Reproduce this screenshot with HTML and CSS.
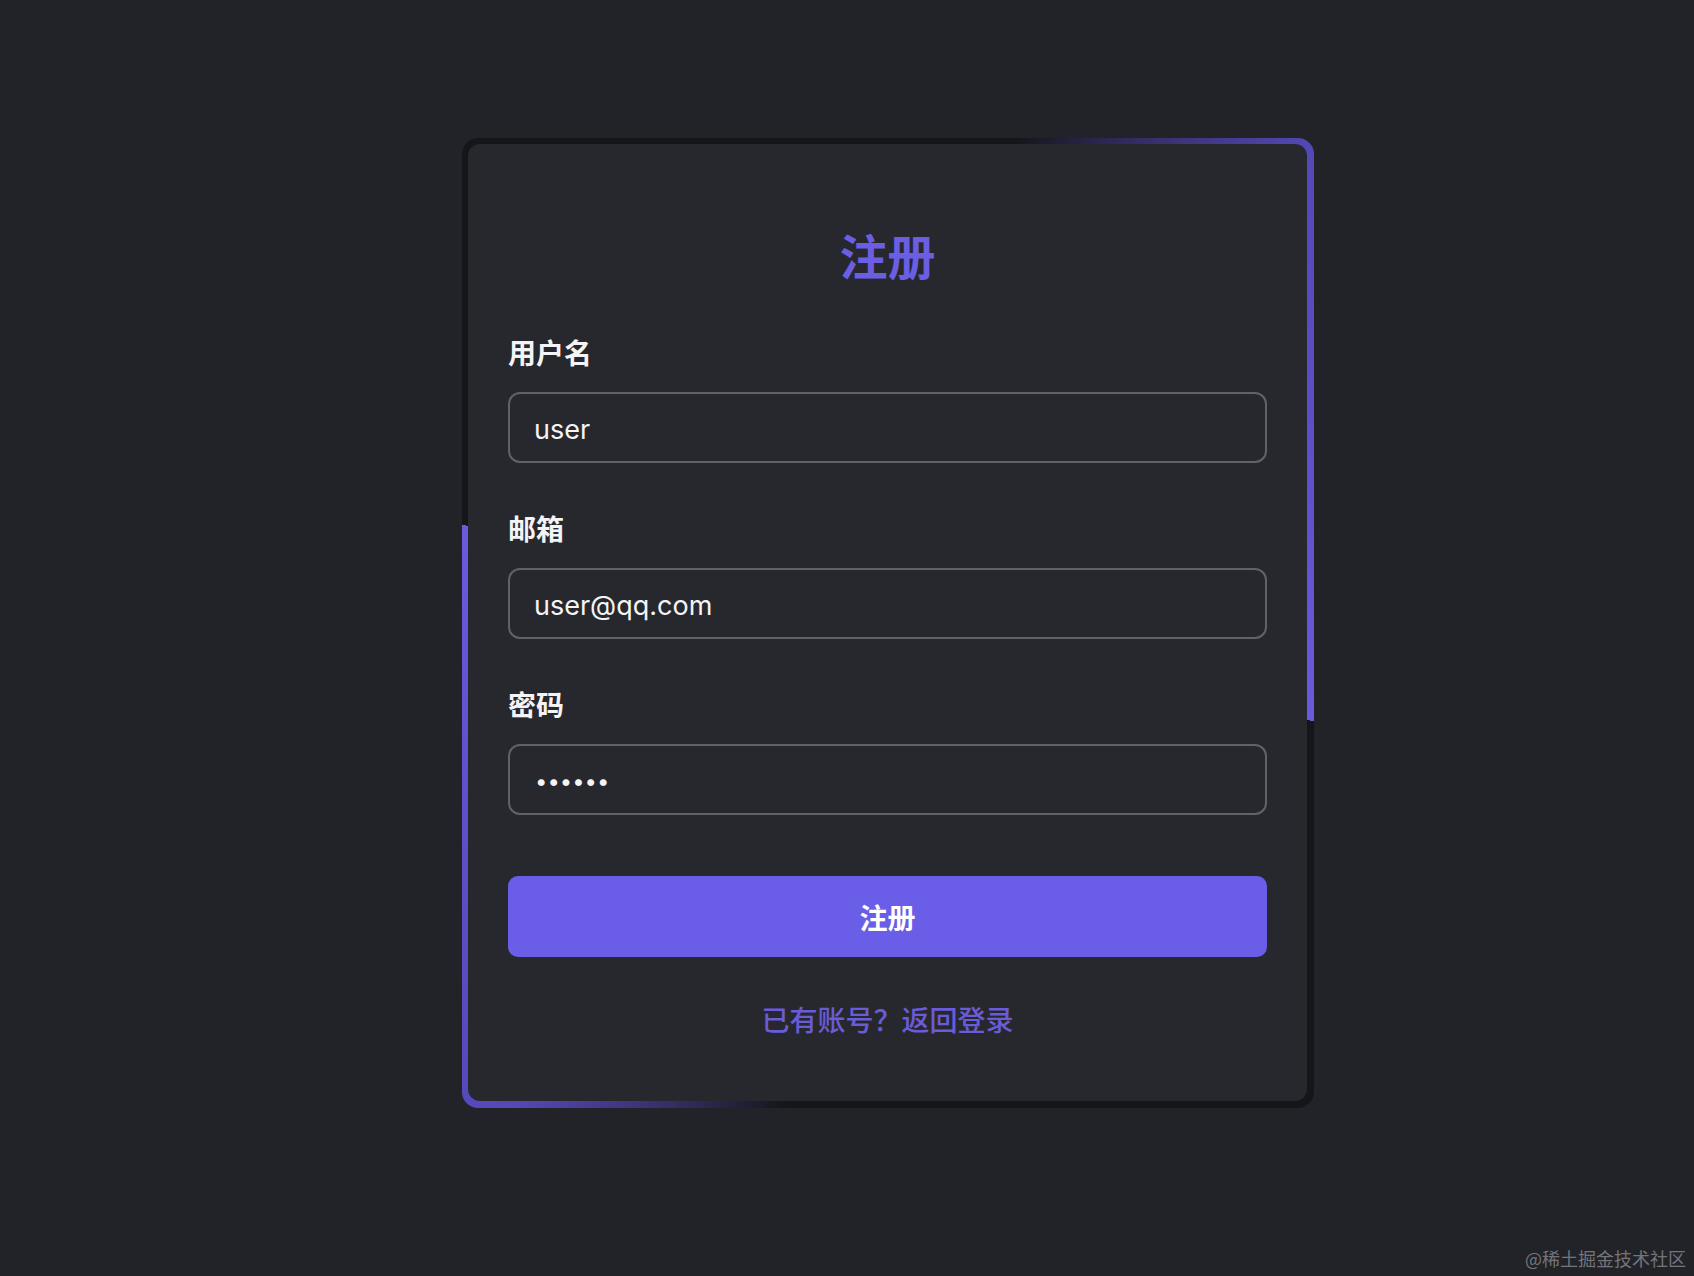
FILE: index.html
```html
<!DOCTYPE html>
<html lang="zh-CN">
<head>
<meta charset="utf-8">
<title>注册</title>
<link rel="stylesheet" href="styles.css">
</head>
<body>
<main class="page">
  <div class="card-frame">
    <form class="card">
      <h1 class="title">注册</h1>
      <div class="field">
        <label class="label" for="username">用户名</label>
        <input class="input" id="username" type="text" value="user">
      </div>
      <div class="field">
        <label class="label" for="email">邮箱</label>
        <input class="input" id="email" type="email" value="user@qq.com">
      </div>
      <div class="field">
        <label class="label" for="password">密码</label>
        <input class="input input-password" id="password" type="password" value="123456">
      </div>
      <button class="submit" type="button">注册</button>
      <a class="link" href="#">已有账号？返回登录</a>
    </form>
  </div>
</main>
<div class="watermark">@稀土掘金技术社区</div>
</body>
</html>
```

FILE: styles.css
```css
* {
  box-sizing: border-box;
}

html, body {
  margin: 0;
  height: 100%;
}

body {
  background: #222328;
  font-family: Inter, "Noto Sans CJK SC", sans-serif;
  color: #f4f4f6;
  overflow: hidden;
}

.page {
  padding: 138px 0 0 462px;
}

.card-frame {
  width: 852px;
  padding: 6px 7px 7px 6px;
  border-radius: 16px;
  background: conic-gradient(from 0deg at 50% 50%,
    #15161a 0deg 15deg,
    #5549b8 42deg,
    #6a5ae0 103deg,
    #15161a 103deg 192deg,
    #5549b8 218deg,
    #6a5ae0 283deg,
    #15161a 283deg 360deg);
}

.card {
  display: flex;
  flex-direction: column;
  background: #27282d;
  border-radius: 12px;
  padding: 81px 40px 64px 40px;
}

.title {
  margin: 0 0 51px;
  text-align: center;
  font-family: "Noto Sans CJK SC", sans-serif;
  font-size: 48px;
  line-height: 58px;
  font-weight: 700;
  color: #6b5ee3;
}

.field {
  display: flex;
  flex-direction: column;
  margin-bottom: 47px;
}

.field:last-of-type {
  margin-bottom: 61px;
}

.label {
  font-family: "Noto Sans CJK SC", sans-serif;
  font-size: 28px;
  line-height: 36px;
  font-weight: 700;
  color: #f4f4f6;
  margin-bottom: 22px;
}

.input {
  width: 100%;
  height: 71px;
  padding: 3px 24px 0;
  border: 2px solid #616267;
  border-radius: 12px;
  background: transparent;
  color: #f4f4f6;
  font-family: Inter, "Noto Sans CJK SC", sans-serif;
  font-size: 27px;
  outline: none;
}

.input-password {
  font-size: 22px;
  padding-left: 25px;
}

.submit {
  height: 81px;
  border: none;
  border-radius: 10px;
  background: #6a5ee8;
  color: #ffffff;
  font-family: "Noto Sans CJK SC", sans-serif;
  font-size: 28px;
  font-weight: 700;
  cursor: pointer;
  margin-bottom: 44px;
}

.link {
  align-self: center;
  font-family: "Noto Sans CJK SC", sans-serif;
  font-size: 28px;
  line-height: 36px;
  font-weight: 500;
  color: #6a5bd8;
  text-decoration: none;
}

.watermark {
  position: absolute;
  right: 8px;
  bottom: 7px;
  font-family: "Noto Sans CJK SC", sans-serif;
  font-size: 18px;
  line-height: 22px;
  color: #74757a;
}
```
